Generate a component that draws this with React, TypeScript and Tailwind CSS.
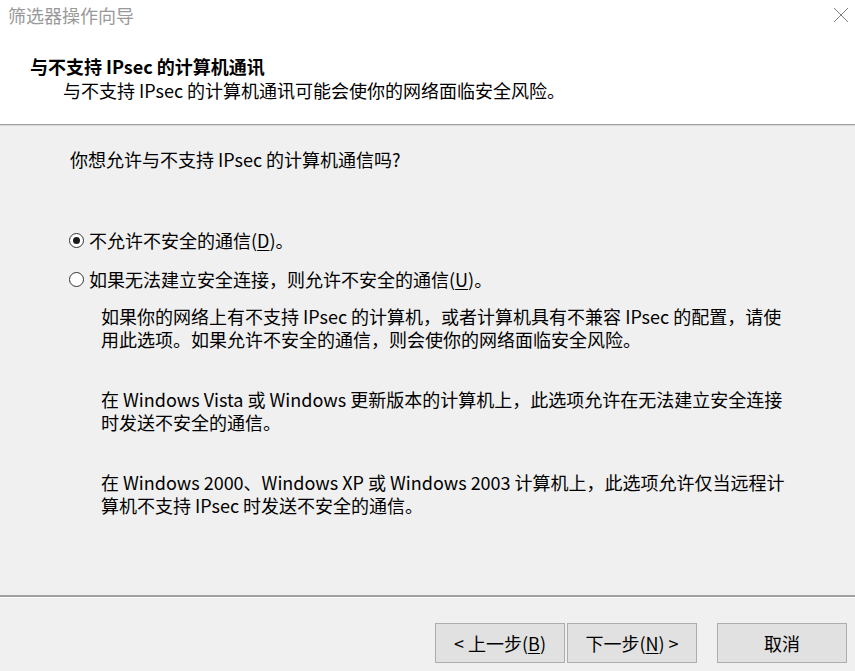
import React from "react";

const font = { fontFamily: '"Noto Sans CJK SC", "Noto Sans", sans-serif' };

function Radio({ checked }: { checked?: boolean }) {
  return (
    <span className="flex h-[15px] w-[15px] shrink-0 items-center justify-center rounded-full border border-[#333333] bg-white">
      {checked && <span className="h-[7px] w-[7px] rounded-full bg-[#1a1a1a]" />}
    </span>
  );
}

function WizButton({ children, className = "" }: { children: React.ReactNode; className?: string }) {
  return (
    <button className={"flex h-[40px] w-[130px] items-center justify-center border border-[#adadad] bg-[#e1e1e1] text-[18px] text-black " + className}>
      {children}
    </button>
  );
}

export default function App() {
  return (
    <div className="flex h-[671px] w-[855px] flex-col overflow-hidden bg-[#f0f0f0] text-black" style={font}>
      {/* header */}
      <div className="h-[124px] bg-white">
        <div className="flex h-[30px] items-center justify-between pl-[8px] pr-[6px]">
          <span className="text-[18px] leading-none text-[#999999]">筛选器操作向导</span>
          <svg width="16" height="16" viewBox="0 0 16 16" className="mt-[-1px]">
            <path d="M1 1 L15 15 M15 1 L1 15" stroke="#808080" strokeWidth="1" />
          </svg>
        </div>
        <div className="mt-[24px] pl-[30px] text-[18px] font-bold leading-[24px]">与不支持 IPsec 的计算机通讯</div>
        <div className="pl-[63px] text-[18px] leading-[24px]">与不支持 IPsec 的计算机通讯可能会使你的网络面临安全风险。</div>
      </div>
      <div className="h-[1px] bg-[#a0a0a0]" />
      <div className="h-[1px] bg-[#d8d8d8]" />

      {/* body */}
      <div className="flex-1 pl-[70px] pt-[21px] text-[18px] leading-[24px]">
        <div>你想允许与不支持 IPsec 的计算机通信吗?</div>

        <label className="mt-[57px] flex items-center gap-[5px] -ml-[1px]">
          <Radio checked />
          <span>
            不允许不安全的通信(<span className="underline underline-offset-2">D</span>)。
          </span>
        </label>
        <label className="mt-[15px] flex items-center gap-[5px] -ml-[1px]">
          <Radio />
          <span>
            如果无法建立安全连接，则允许不安全的通信(<span className="underline underline-offset-2">U</span>)。
          </span>
        </label>

        <div className="mt-[14px] ml-[31px] flex flex-col gap-[37px] whitespace-nowrap leading-[23px]">
          <p>
            如果你的网络上有不支持 IPsec 的计算机，或者计算机具有不兼容 IPsec 的配置，请使
            <br />
            用此选项。如果允许不安全的通信，则会使你的网络面临安全风险。
          </p>
          <p>
            在 Windows Vista 或 Windows 更新版本的计算机上，此选项允许在无法建立安全连接
            <br />
            时发送不安全的通信。
          </p>
          <p>
            在 Windows 2000、Windows XP 或 Windows 2003 计算机上，此选项允许仅当远程计
            <br />
            算机不支持 IPsec 时发送不安全的通信。
          </p>
        </div>
      </div>

      <div className="h-[2px] bg-[#a0a0a0]" />
      <div className="h-[1px] bg-white" />

      {/* footer */}
      <div className="flex h-[73px] items-start justify-end pr-[8px] pt-[25px]">
        <WizButton>
          &lt; 上一步(<span className="underline underline-offset-2">B</span>)
        </WizButton>
        <WizButton className="ml-[2px]">
          下一步(<span className="underline underline-offset-2">N</span>) &gt;
        </WizButton>
        <WizButton className="ml-[20px]">取消</WizButton>
      </div>
    </div>
  );
}
